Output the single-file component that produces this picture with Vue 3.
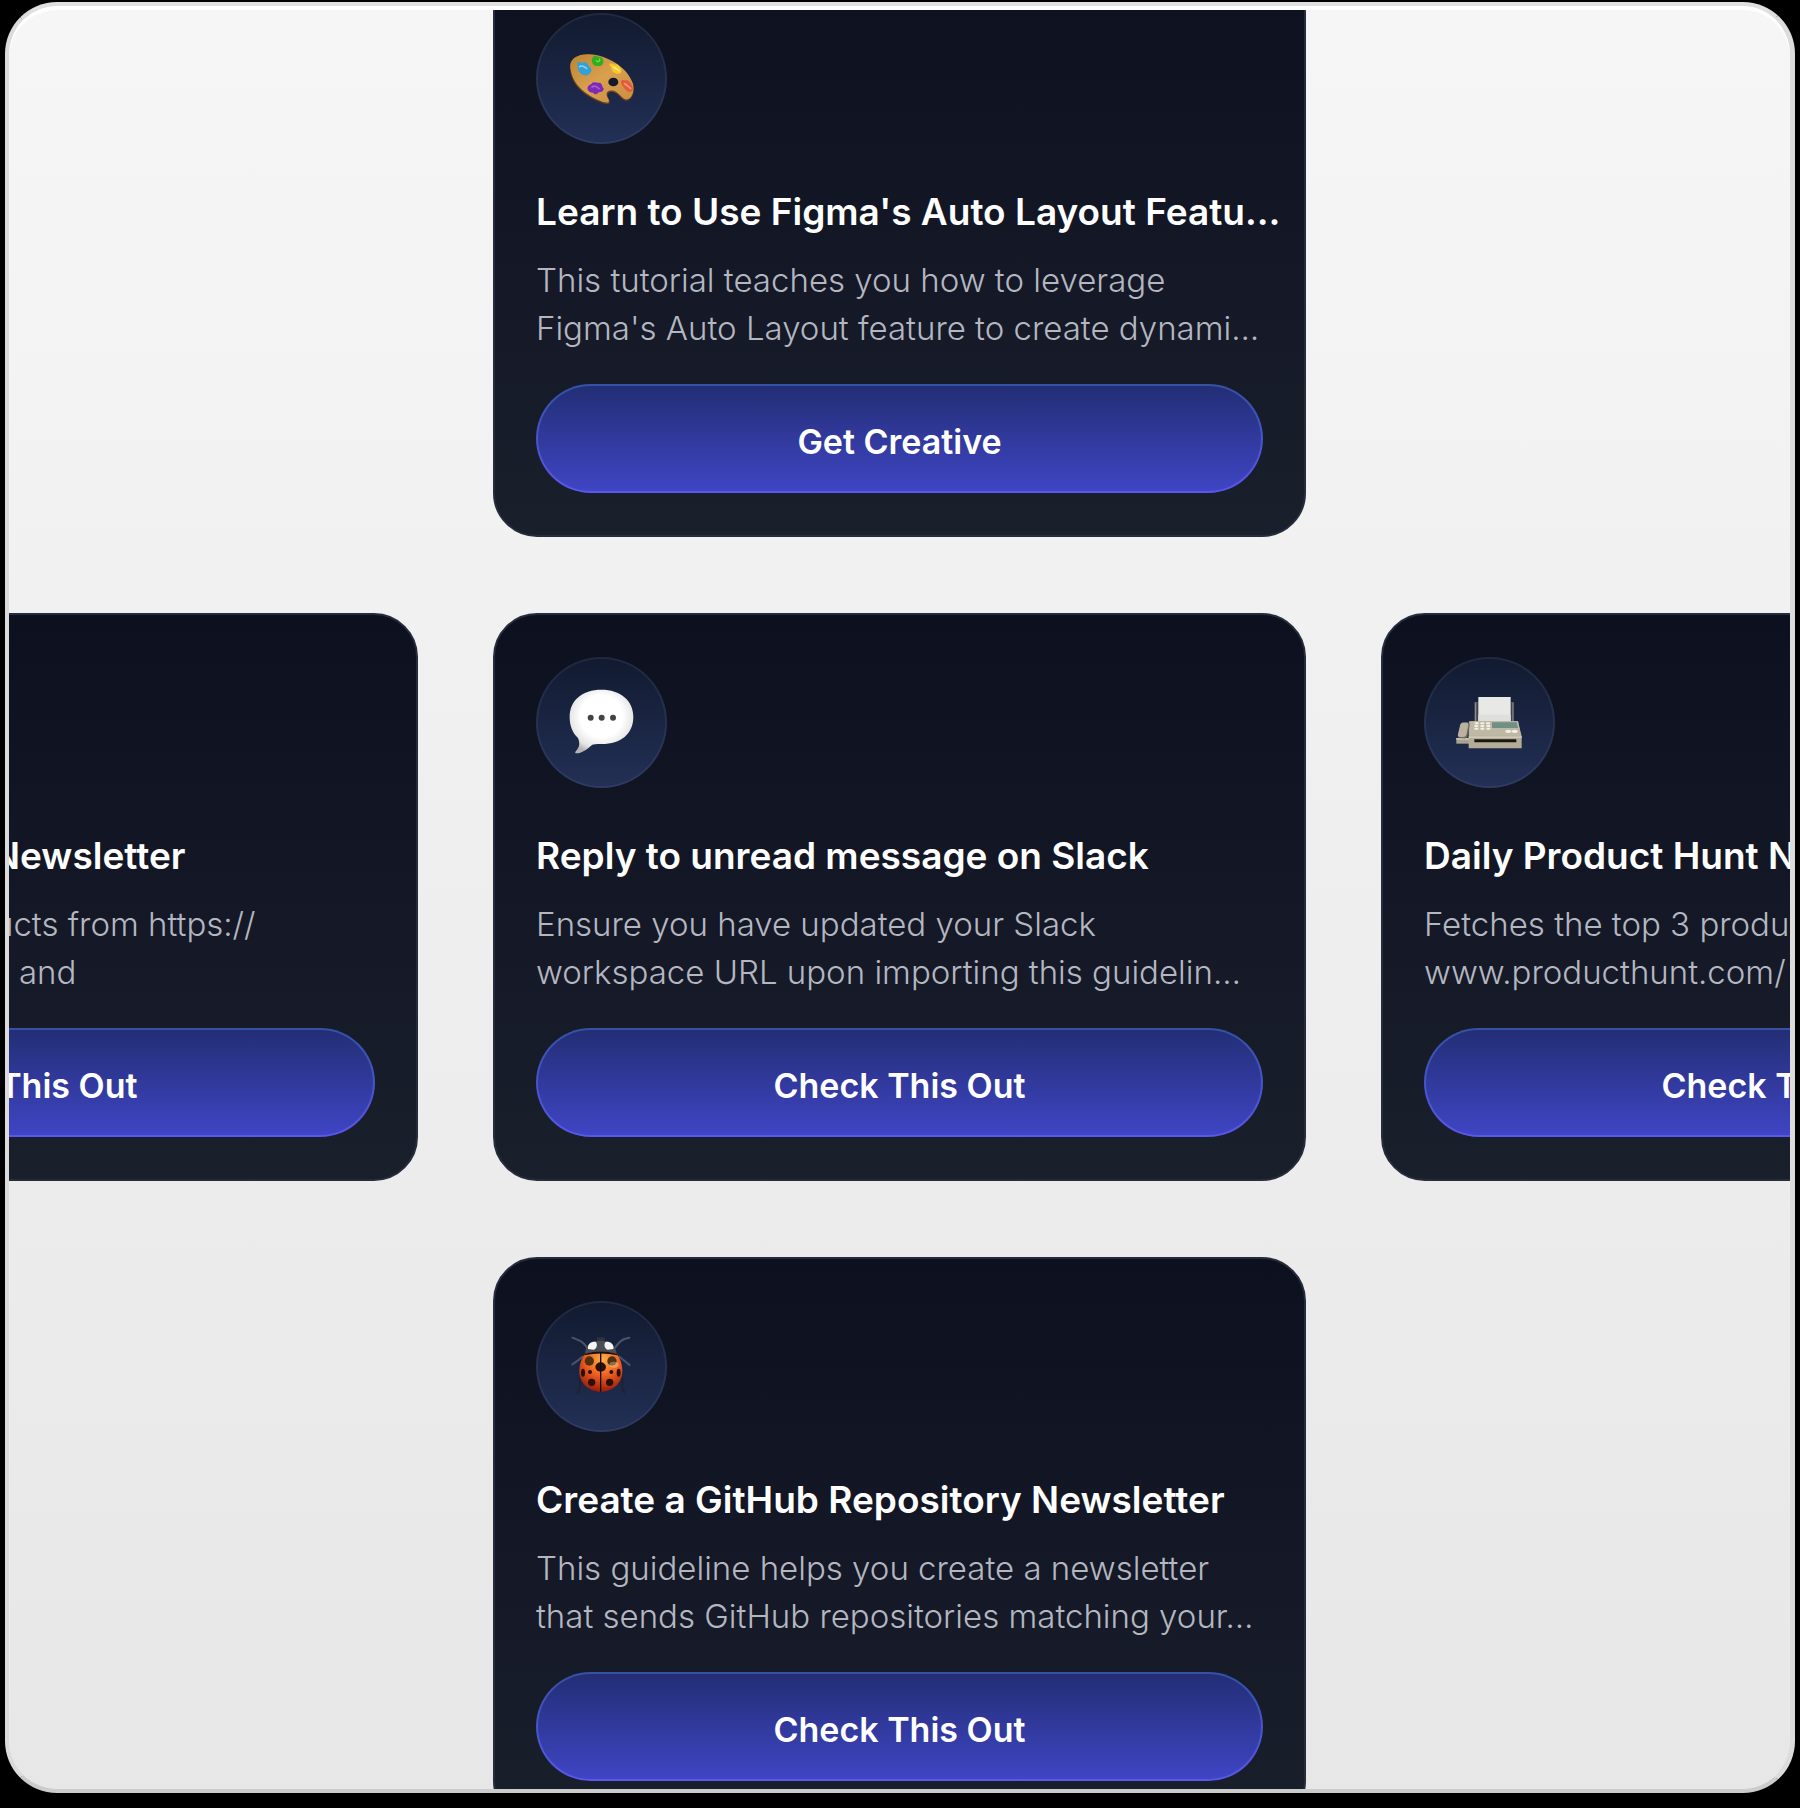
<template>
	<div class="page">
		<main class="panel">
			<div class="viewport">
				<div class="card-grid">
					<article
						v-for="card in cards"
						:key="card.slot"
						class="card"
						:class="card.slot"
					>
						<div class="card-icon">
							<!-- 调色板 -->
							<svg v-if="card.icon === 'palette'" viewBox="19 41 393 393" aria-hidden="true">
								<defs>
									<linearGradient id="wood" x1="0" y1="0" x2="1" y2="1">
										<stop offset="0" stop-color="#b98532" />
										<stop offset="0.5" stop-color="#d9a050" />
										<stop offset="1" stop-color="#c98d3f" />
									</linearGradient>
								</defs>
								<path d="M121 210C117 178 145 164 180 166C230 169 292 203 310 255C316 279 308 300 293 304C280 307 272 291 259 282C244 273 231 279 234 291C237 300 243 306 238 313C231 320 188 301 163 282C139 263 124 239 121 210Z" fill="#6d431b" />
								<path d="M122 204C119 177 147 163 180 165C230 168 292 201 310 253C315 276 307 296 293 300C281 302 273 287 260 278C245 269 229 274 231 287C232 296 241 302 237 308C229 315 190 297 165 278C140 259 125 235 122 204Z" fill="url(#wood)" />
								<path d="M142 195C142 187 151 187 157 191C164 186 174 190 177 199C181 205 189 208 184 217C180 225 172 231 163 228C154 226 144 215 145 207Z" fill="#36a0d6" />
								<path d="M150 202C156 197 163 201 171 207" fill="none" stroke="#86d5f4" stroke-width="5" stroke-linecap="round" />
								<path d="M187 180C188 170 199 166 204 173C214 169 222 178 221 188C220 198 211 203 203 199C195 203 184 192 187 180Z" fill="#2fae20" />
								<path d="M200 184C205 190 212 185 210 179" fill="none" stroke="#7bdc4b" stroke-width="4" stroke-linecap="round" />
								<path d="M239 193C248 190 254 199 262 195C272 202 280 216 272 222C263 227 248 219 246 210C247 203 240 202 239 193Z" fill="#f5c92b" />
								<path d="M252 204C258 206 263 212 268 213" fill="none" stroke="#ffec82" stroke-width="5" stroke-linecap="round" />
								<path d="M274 246C277 238 287 244 294 243C304 249 312 264 309 273C304 281 291 278 286 269C280 262 273 255 274 246Z" fill="#e45c3c" />
								<path d="M285 253C292 257 297 263 303 267" fill="none" stroke="#f69b80" stroke-width="5" stroke-linecap="round" />
								<path d="M174 264C176 255 185 257 188 250C196 246 202 252 209 250C219 252 216 261 222 267C223 276 214 279 207 279C201 288 194 285 190 280C181 281 171 273 174 264Z" fill="#7e2bb4" />
								<path d="M187 263C194 258 202 262 208 268" fill="none" stroke="#ad5be0" stroke-width="5" stroke-linecap="round" />
								<ellipse cx="251" cy="248" rx="15" ry="13" fill="#14192b" />
							</svg>

							<!-- 对话气泡 -->
							<svg v-else-if="card.icon === 'speech'" viewBox="19 17 393 393" aria-hidden="true">
								<defs>
									<radialGradient id="bubble" cx="0.5" cy="0.42" r="0.6">
										<stop offset="0.55" stop-color="#ffffff" />
										<stop offset="0.85" stop-color="#e4e4e4" />
										<stop offset="1" stop-color="#b4b4b4" />
									</radialGradient>
								</defs>
								<path d="M215 115C272 115 311 147 311 196C311 248 273 278 217 278C206 278 197 277 188 280C173 293 156 306 140 306C134 306 137 300 142 295C150 287 151 273 145 260C129 245 120 224 120 197C120 147 158 115 215 115Z" fill="url(#bubble)" />
								<circle cx="183" cy="199" r="9" fill="#444444" />
								<circle cx="216" cy="199" r="9" fill="#444444" />
								<circle cx="250" cy="199" r="9" fill="#444444" />
							</svg>

							<!-- 传真机 -->
							<svg v-else-if="card.icon === 'fax'" viewBox="31 17 393 393" aria-hidden="true">
								<path d="M183 153H300V214H183Z" fill="#8d8b80" />
								<path d="M188 153H296V214H188Z" fill="#3d4150" />
								<path d="M194 137H291V212H194Z" fill="#e8e8e6" />
								<path d="M194 190H291V212H194Z" fill="#dededb" />
								<path d="M128 260H166V277H128Z" fill="#aaa391" />
								<path d="M128 260H166V265H128Z" fill="#cdc6b4" />
								<path d="M166 210H313L324 255V291H165V240Z" fill="#b3ac99" />
								<path d="M170 210H313L322 253H166Z" fill="#bfb8a5" />
								<path d="M235 213H309L313 230H235Z" fill="#6f9087" />
								<path d="M165 255H324V260H165Z" fill="#d0c9b6" />
								<path d="M182 264H308V273H182Z" fill="#17160f" />
								<g fill="#f1efe8">
									<rect x="183" y="213" width="12" height="6" rx="2" />
									<rect x="200" y="213" width="12" height="6" rx="2" />
									<rect x="217" y="213" width="12" height="6" rx="2" />
									<rect x="182" y="221" width="12" height="6" rx="2" />
									<rect x="200" y="221" width="12" height="6" rx="2" />
									<rect x="218" y="221" width="12" height="6" rx="2" />
									<rect x="182" y="229" width="12" height="6" rx="2" />
									<rect x="200" y="229" width="12" height="6" rx="2" />
									<rect x="218" y="229" width="12" height="6" rx="2" />
									<ellipse cx="284" cy="240" rx="9" ry="5" />
									<ellipse cx="303" cy="240" rx="9" ry="5" />
								</g>
								<path d="M142 217Q144 213 150 213H162Q169 214 168 222L161 257Q158 262 150 261H138Q132 260 133 252Z" fill="#6d685b" />
								<path d="M140 219Q142 214 148 214H159Q165 215 164 222L158 251Q156 257 149 257H138Q131 256 133 249Z" fill="#b9b2a1" />
							</svg>

							<!-- 瓢虫 -->
							<svg v-else viewBox="19 17 393 393" aria-hidden="true">
								<defs>
									<radialGradient id="shell" cx="0.55" cy="0.2" r="0.85">
										<stop offset="0" stop-color="#ffb04a" />
										<stop offset="0.5" stop-color="#ea5a20" />
										<stop offset="1" stop-color="#8f1505" />
									</radialGradient>
								</defs>
								<g fill="none" stroke="#4b5468" stroke-width="6" stroke-linecap="round" stroke-linejoin="round">
									<path d="M172 156Q157 136 143 133L128 127" />
									<path d="M257 156Q270 137 284 131L299 127" />
									<path d="M158 184L144 196L128 207" />
									<path d="M269 184L285 197L300 209" />
								</g>
								<g fill="none" stroke="#1f2230" stroke-width="6" stroke-linecap="round" stroke-linejoin="round">
									<path d="M156 242L150 250L151 277L144 294" />
									<path d="M271 242L279 252L277 277L285 294" />
								</g>
								<path d="M202 126H225V144H202Z" fill="#2d323f" />
								<path d="M166 176C167 148 189 136 213 136C238 136 259 148 261 176Z" fill="#4a4d55" />
								<path d="M175 161C172 146 184 138 197 139C205 143 202 160 192 163Z" fill="#f5f5f5" />
								<path d="M251 161C254 146 242 138 229 139C221 143 224 160 234 163Z" fill="#f5f5f5" />
								<path d="M166 175Q213 163 261 175C272 189 278 208 278 226C278 263 249 289 213 289C177 289 149 263 149 226C149 208 155 189 166 175Z" fill="url(#shell)" />
								<path d="M166 175Q213 162 261 175L264 180Q213 169 163 180Z" fill="#15120f" />
								<g fill="#2a1006">
									<circle cx="179" cy="197" r="14" fill="#51300b" />
									<circle cx="247" cy="197" r="14" fill="#51300b" />
									<ellipse cx="213" cy="215" rx="16" ry="14" />
									<ellipse cx="160" cy="232" rx="6" ry="12" />
									<ellipse cx="267" cy="232" rx="6" ry="12" />
									<circle cx="181" cy="230" r="6" />
									<circle cx="245" cy="230" r="6" />
									<circle cx="186" cy="261" r="11" />
									<circle cx="240" cy="261" r="11" />
								</g>
								<path d="M213 171V289" stroke="#120d0a" stroke-width="4" />
								<ellipse cx="253" cy="208" rx="14" ry="9" fill="#ffe7b0" opacity="0.350" />
							</svg>
						</div>

						<h2 class="card-title">{{ card.title }}</h2>
						<p class="card-desc">
							<span v-for="line in card.lines" :key="line">{{ line }}</span>
						</p>
						<button type="button" class="card-btn">{{ card.action }}</button>
					</article>
				</div>
			</div>
		</main>
	</div>
</template>

<script setup>
import { ref } from 'vue';

const productHunt = {
	icon: 'fax',
	title: 'Daily Product Hunt Newsletter',
	lines: ['Fetches the top 3 products from https://', 'www.producthunt.com/ and'],
	action: 'Check This Out'
};

const cards = ref([
	{
		slot: 'top',
		icon: 'palette',
		title: "Learn to Use Figma's Auto Layout Featu…",
		lines: [
			'This tutorial teaches you how to leverage',
			"Figma's Auto Layout feature to create dynami…"
		],
		action: 'Get Creative'
	},
	{ slot: 'left', ...productHunt },
	{
		slot: 'center',
		icon: 'speech',
		title: 'Reply to unread message on Slack',
		lines: [
			'Ensure you have updated your Slack',
			'workspace URL upon importing this guidelin…'
		],
		action: 'Check This Out'
	},
	{ slot: 'right', ...productHunt },
	{
		slot: 'bottom',
		icon: 'ladybug',
		title: 'Create a GitHub Repository Newsletter',
		lines: [
			'This guideline helps you create a newsletter',
			'that sends GitHub repositories matching your…'
		],
		action: 'Check This Out'
	}
]);
</script>

<style>
body {
	margin: 0;
	background: #000;
}
</style>

<style scoped>
.page {
	height: 100vh;
	padding: 2px 5px 15px;
	box-sizing: border-box;
	background: #000;
	font-family: Inter, "Liberation Sans", sans-serif;
}

.panel {
	height: 100%;
	box-sizing: border-box;
	padding-top: 4px;
	border-style: solid;
	border-width: 4px 5px 4px 4px;
	border-color: #e0dfdf #dcdcdd #cbcdcd #dcdadb;
	border-radius: 52px;
	overflow: hidden;
	background: linear-gradient(#f6f6f6, #e7e7e7);
	box-shadow: inset 0 4px 1px #fff;
}

.viewport {
	height: 100%;
	box-sizing: border-box;
	padding-bottom: 6px;
	display: grid;
	place-content: center;
	overflow: hidden;
}

.card-grid {
	display: grid;
	grid-template-columns: repeat(3, min(813px, 88vw));
	grid-template-areas:
		". top ."
		"left center right"
		". bottom .";
	gap: 76px 75px;
}

.top {
	grid-area: top;
}

.left {
	grid-area: left;
}

.center {
	grid-area: center;
}

.right {
	grid-area: right;
}

.bottom {
	grid-area: bottom;
}

.card {
	display: flex;
	flex-direction: column;
	padding: 42px 41px;
	border: 2px solid #272c3c;
	border-radius: 44px;
	background: linear-gradient(#0d111f, #141826 50%, #1a1f2c);
}

.card-icon {
	position: relative;
	width: 131px;
	height: 131px;
	margin-bottom: 44px;
	border-radius: 50%;
	background: linear-gradient(#111a2f, #233056);
	box-shadow: inset 0 0 0 2px rgba(120, 130, 160, 0.14);
}

.card-icon svg {
	display: block;
	width: 100%;
	height: 100%;
}

.card-title {
	margin: 0 0 20px;
	font-size: 37px;
	font-weight: 600;
	line-height: 48px;
	color: #fff;
	white-space: nowrap;
}

.card-desc {
	margin: 0 0 32px;
	font-size: 33px;
	font-weight: 300;
	line-height: 48px;
	color: #b4b7c0;
	white-space: nowrap;
}

.card-desc span {
	display: block;
}

.card-btn {
	height: 109px;
	padding: 8px 0 0;
	border: 2px solid transparent;
	border-radius: 55px;
	background:
		linear-gradient(#232e75, #3f45c4) padding-box,
		linear-gradient(#3352a5, #5a57ec) border-box;
	font-family: inherit;
	font-size: 34px;
	font-weight: 600;
	line-height: 48px;
	color: #fff;
	cursor: pointer;
}
</style>
